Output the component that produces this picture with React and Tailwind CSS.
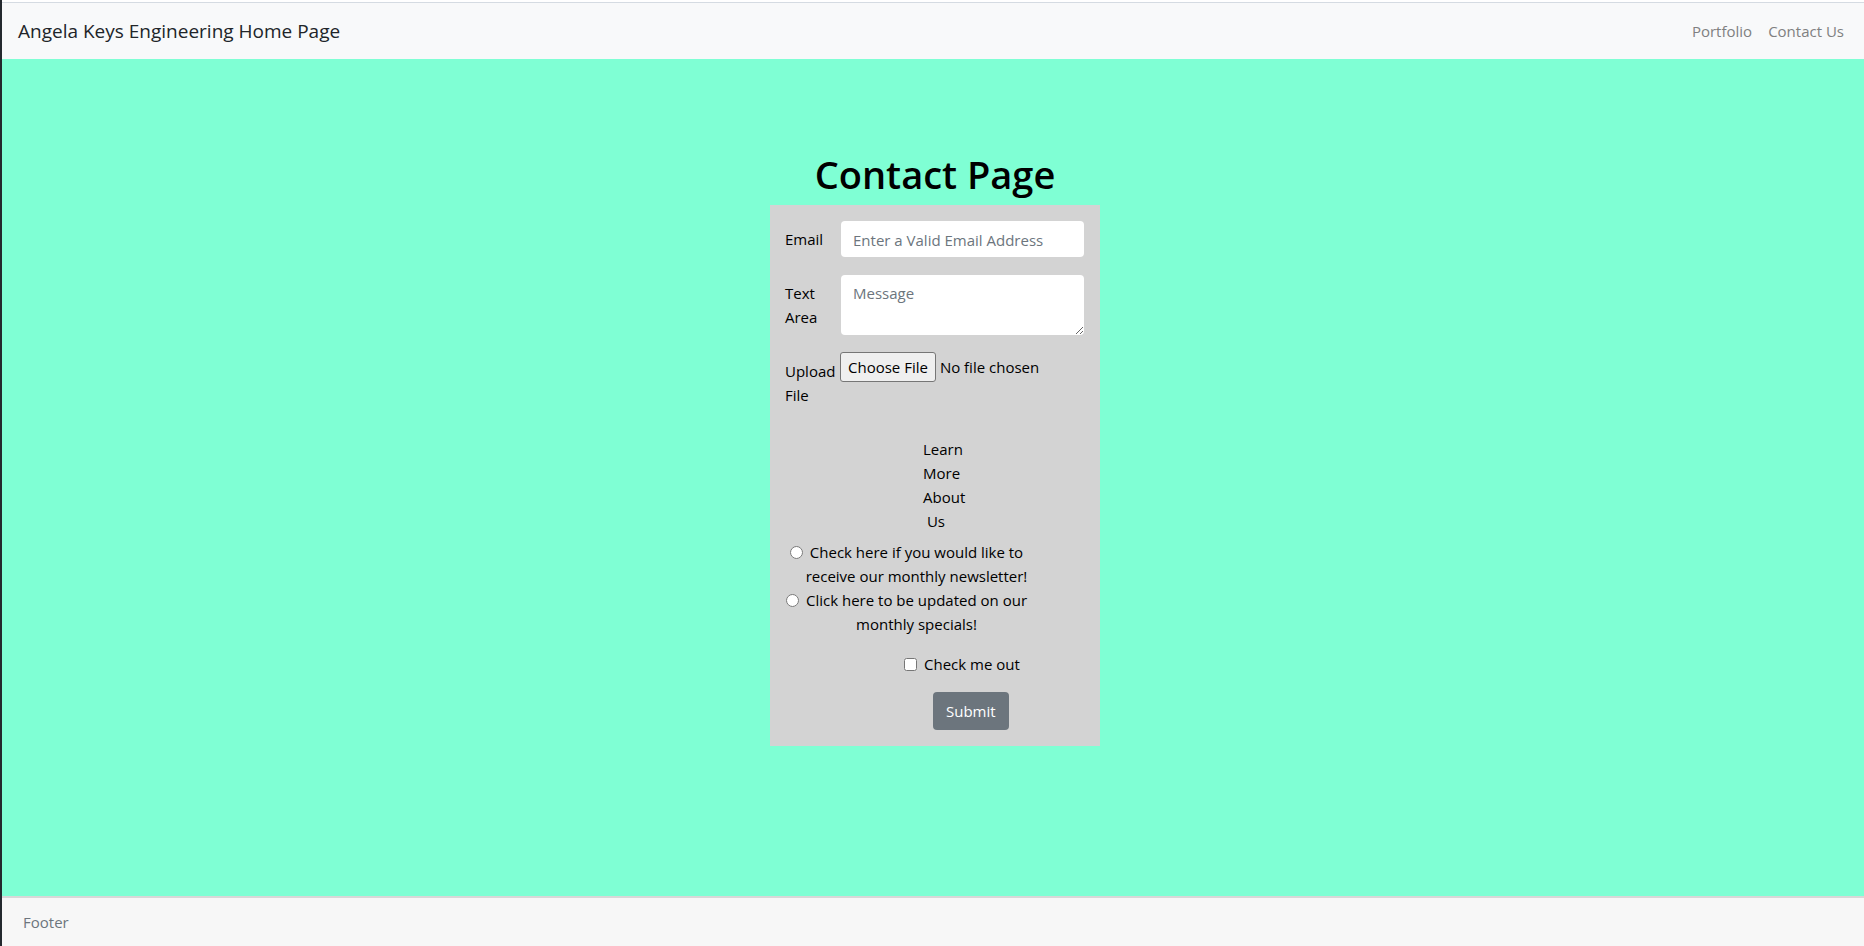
export default function App() {
  return (
    <div className="flex min-h-screen flex-col border-l-2 border-[#24292e] bg-[#7fffd4] font-['Open_Sans','Noto_Sans',sans-serif] text-[15px] leading-6 text-black">
      <header className="border-t-2 border-white">
        <nav className="flex h-[57px] items-center justify-between border-t border-[#d5dbe2] bg-[#f8f9fa] pr-5 pl-4">
          <a href="#home" className="text-[19px] text-[#212529]">
            Angela Keys Engineering Home Page
          </a>
          <div className="flex gap-4 text-[#7f8081]">
            <a href="#portfolio">Portfolio</a>
            <a href="#contact">Contact Us</a>
          </div>
        </nav>
      </header>

      <main className="flex-1 pt-[91px] pb-8 pl-1">
        <h1 className="mb-[7px] text-center text-[38px] leading-[48px] font-semibold">Contact Page</h1>

        <form className="mx-auto w-full max-w-[330px] bg-[#d3d3d3] py-4 pr-4 pl-[15px]" onSubmit={(e) => e.preventDefault()}>
          <div className="mb-[18px] flex">
            <label htmlFor="email" className="w-14 shrink-0 pt-1.5">
              Email
            </label>
            <input
              id="email"
              type="email"
              placeholder="Enter a Valid Email Address"
              className="h-9 w-full min-w-0 rounded bg-white px-3 pt-1 pb-0.5 placeholder:text-[#6c757d]"
            />
          </div>

          <div className="mb-4 flex">
            <label htmlFor="message" className="w-14 shrink-0 pt-1.5">
              Text
              <br />
              Area
            </label>
            <textarea
              id="message"
              placeholder="Message"
              className="block h-[60px] w-full min-w-0 resize rounded bg-white px-3 py-1.5 placeholder:text-[#6c757d]"
            />
          </div>

          <div className="mb-[30px] flex items-start">
            <label htmlFor="file" className="w-[55px] shrink-0 pt-2">
              Upload
              <br />
              File
            </label>
            <input
              id="file"
              type="file"
              className="w-full min-w-0 pt-px file:mr-1 file:rounded-[3px] file:border file:border-solid file:border-[#767676] file:bg-[#efefef] file:px-[7px] file:py-0.5 file:text-black"
            />
          </div>

          <fieldset className="mb-4">
            <legend className="mb-[7px] pl-[138px]">
              Learn
              <br />
              More
              <br />
              About
              <br />
              &nbsp;Us
            </legend>
            <div className="w-[243px] text-center">
              <input id="newsletter" type="radio" name="updates" className="m-0 mr-[7px] size-[13px] align-[-1px]" />
              <label htmlFor="newsletter">
                Check here if you would like to
                <br />
                <span className="pl-5">receive our monthly newsletter!</span>
              </label>
            </div>
            <div className="w-[243px] text-center">
              <input id="specials" type="radio" name="updates" className="m-0 mr-[7px] size-[13px] align-[-1px]" />
              <label htmlFor="specials">
                Click here to be updated on our
                <br />
                <span className="pl-5">monthly specials!</span>
              </label>
            </div>
          </fieldset>

          <div className="mb-4 flex items-center gap-[7px] pl-[119px]">
            <input id="check" type="checkbox" className="m-0 size-[13px]" />
            <label htmlFor="check">Check me out</label>
          </div>

          <div className="pl-[148px]">
            <button type="submit" className="block h-[38px] rounded bg-[#6c757d] px-[13px] text-white">
              Submit
            </button>
          </div>
        </form>
      </main>

      <footer className="h-[50px] border-t-2 border-[#d8d8d8] bg-[#f7f7f7] px-[21px] py-3 text-[#6c757d]">Footer</footer>
    </div>
  );
}
